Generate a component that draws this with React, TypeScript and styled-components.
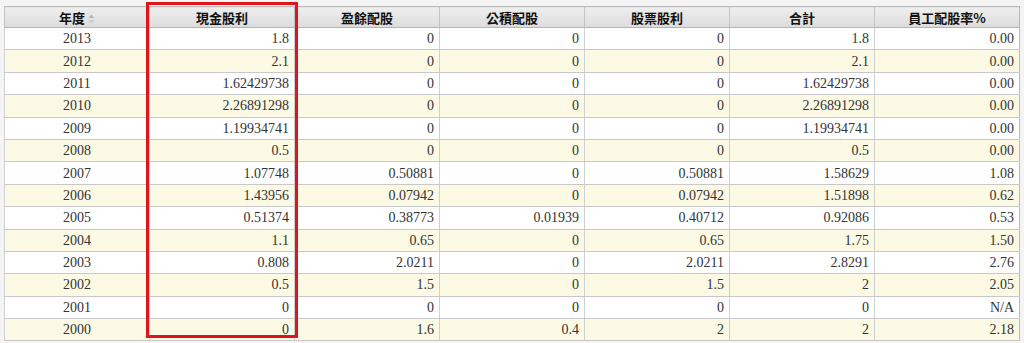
import React from 'react';
import styled, { createGlobalStyle } from 'styled-components';

const GlobalStyle = createGlobalStyle`
  html, body {
    margin: 0;
    padding: 0;
    background: #f4f4f4;
  }
`;

const headers = ['現金股利', '盈餘配股', '公積配股', '股票股利', '合計', '員工配股率%'];

const rows: string[][] = [
  ['2013', '1.8', '0', '0', '0', '1.8', '0.00'],
  ['2012', '2.1', '0', '0', '0', '2.1', '0.00'],
  ['2011', '1.62429738', '0', '0', '0', '1.62429738', '0.00'],
  ['2010', '2.26891298', '0', '0', '0', '2.26891298', '0.00'],
  ['2009', '1.19934741', '0', '0', '0', '1.19934741', '0.00'],
  ['2008', '0.5', '0', '0', '0', '0.5', '0.00'],
  ['2007', '1.07748', '0.50881', '0', '0.50881', '1.58629', '1.08'],
  ['2006', '1.43956', '0.07942', '0', '0.07942', '1.51898', '0.62'],
  ['2005', '0.51374', '0.38773', '0.01939', '0.40712', '0.92086', '0.53'],
  ['2004', '1.1', '0.65', '0', '0.65', '1.75', '1.50'],
  ['2003', '0.808', '2.0211', '0', '2.0211', '2.8291', '2.76'],
  ['2002', '0.5', '1.5', '0', '1.5', '2', '2.05'],
  ['2001', '0', '0', '0', '0', '0', 'N/A'],
  ['2000', '0', '1.6', '0.4', '2', '2', '2.18'],
];

const Page = styled.div`
  padding: 6px 4px 0 4px;
  width: 1016px;
`;

const Frame = styled.div`
  position: relative;
`;

const Table = styled.table`
  width: 1016px;
  border-collapse: collapse;
  table-layout: fixed;
  background: #ffffff;
  border: 1px solid #b9b9b9;
  font-family: "Liberation Serif", "Noto Sans CJK TC", serif;
  font-size: 14px;
  color: #333;
`;

const Th = styled.th`
  height: 20px;
  padding: 0;
  font-family: "Noto Sans CJK TC", sans-serif;
  font-size: 13px;
  font-weight: 700;
  color: #111;
  text-align: center;
  background: linear-gradient(#eeeeee, #dcdcdc);
  border-left: 1px solid #c4c4c4;
  border-bottom: 1px solid #b4b4b4;
`;

const Tr = styled.tr<{ $alt: boolean }>`
  background: ${p => (p.$alt ? '#fcf9e4' : '#ffffff')};
`;

const Td = styled.td<{ $center?: boolean }>`
  height: 21.4px;
  padding: 0 5px;
  line-height: 21px;
  text-align: ${p => (p.$center ? 'center' : 'right')};
  border-left: 1px solid #d0d0d0;
  border-bottom: 1px solid #c8c8c8;
  white-space: nowrap;
`;

const SortIcon = styled.svg`
  margin-left: 3px;
  vertical-align: -1px;
`;

const Highlight = styled.div`
  position: absolute;
  top: -4px;
  left: 142px;
  width: 146px;
  height: 330px;
  border: 3px solid #e1141c;
  pointer-events: none;
`;

export default function App() {
  return (
    <Page>
      <GlobalStyle />
      <Frame>
        <Table>
          <thead>
            <tr>
              <Th>
                年度
                <SortIcon width="7" height="10" viewBox="0 0 7 10">
                  <path d="M3.5 0.5 L6.5 4 L0.5 4 Z" fill="#b8b8b8" />
                  <path d="M3.5 9.5 L6.5 6 L0.5 6 Z" fill="#cfcfcf" />
                </SortIcon>
              </Th>
              {headers.map(h => (
                <Th key={h}>{h}</Th>
              ))}
            </tr>
          </thead>
          <tbody>
            {rows.map((r, i) => (
              <Tr key={r[0]} $alt={i % 2 === 1}>
                {r.map((c, j) => (
                  <Td key={j} $center={j === 0}>
                    {c}
                  </Td>
                ))}
              </Tr>
            ))}
          </tbody>
        </Table>
        <Highlight />
      </Frame>
    </Page>
  );
}
